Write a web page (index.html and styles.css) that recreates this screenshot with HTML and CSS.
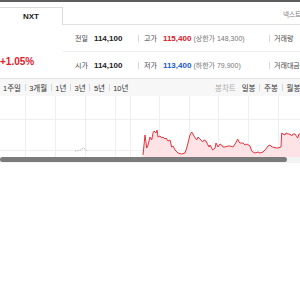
FILE: index.html
```html
<!DOCTYPE html>
<html lang="ko">
<head>
  <meta charset="UTF-8">
  <title>NXT 시세</title>
  <link rel="stylesheet" href="styles.css">
</head>
<body>
  <div class="topbar"></div>

  <div class="head">
    <div class="tab">NXT</div>
    <div class="head-rest">넥스트</div>
  </div>

  <div class="summary">
    <div class="price">
      <span class="rate">+1.05%</span>
    </div>
    <div class="table">
      <div class="row">
        <div class="cell c1"><span class="lbl">전일</span><b>114,100</b></div>
        <div class="cell c2"><span class="lbl">고가</span><b class="up">115,400</b><span class="sub">(상한가 148,300)</span></div>
        <div class="cell c3"><span class="lbl">거래량</span></div>
      </div>
      <div class="row">
        <div class="cell c1"><span class="lbl">시가</span><b>114,100</b></div>
        <div class="cell c2"><span class="lbl">저가</span><b class="down">113,400</b><span class="sub">(하한가 79,900)</span></div>
        <div class="cell c3"><span class="lbl">거래대금</span></div>
      </div>
    </div>
  </div>

  <div class="periods">
    <ul class="menu left">
      <li>1주일</li>
      <li>3개월</li>
      <li>1년</li>
      <li>3년</li>
      <li>5년</li>
      <li>10년</li>
    </ul>
    <ul class="menu right">
      <li class="dim">봉차트</li>
      <li>일봉</li>
      <li>주봉</li>
      <li>월봉</li>
    </ul>
  </div>

  <div class="chart">
    <svg width="300" height="61" viewBox="0 0 300 61">
      <g stroke="#efefef" stroke-width="1">
        <line x1="0" y1="23.5" x2="300" y2="23.5"/>
        <line x1="0" y1="54.5" x2="300" y2="54.5"/>
        <line x1="25.5" y1="0" x2="25.5" y2="61"/>
        <line x1="55.5" y1="0" x2="55.5" y2="61"/>
        <line x1="85.5" y1="0" x2="85.5" y2="61"/>
        <line x1="115.5" y1="0" x2="115.5" y2="61"/>
        <line x1="130.5" y1="0" x2="130.5" y2="61"/>
        <line x1="159.5" y1="0" x2="159.5" y2="61"/>
        <line x1="189.5" y1="0" x2="189.5" y2="61"/>
        <line x1="218.5" y1="0" x2="218.5" y2="61"/>
        <line x1="248.5" y1="0" x2="248.5" y2="61"/>
        <line x1="278.5" y1="0" x2="278.5" y2="61"/>
      </g>
      <polyline points="75,55 77,55 79,54 81,54 83,52 85,53 87,55" fill="none" stroke="#b8b8b8" stroke-width="1" stroke-dasharray="1.5 1"/>
      <polygon fill="#fde3e5" points="143,59 145,39 146.7,52 148,49 150,41 151.7,44 153,37 154,35 156,37 157,34 158,41 160,40 161.7,42 163,41 165,43 166,42 168,45 170,44 171.7,51 173,50 175,54 178,57 181.7,58 185,57 187,51 189,43 190,39 191.7,36 193,38 194,40 196.7,44 198,41 200,43 202.7,46 204,44 206,45 209,51 210,49 212.7,54 215,52 216,47 218,51 220,48 221.7,49 223,51 225,51 228,50 230,50 233,51 235.7,47 237.7,43 239,46 240,47 243,47 245,49 247,48 250,50 251.7,55 253,56 255,57 258,56 260,57 263,56 265,54 266.7,52 268,50 270,49 272,51 273,51 276,52 278,52 281,51 281.7,37 283,38 285,39 286,37 288,38 290,38 291.7,40 293,38 295,38 297.7,42 299,38 300,38 300,61 143,61"/>
      <polyline fill="none" stroke="#e8323c" stroke-width="1" stroke-linejoin="round" points="143,59 145,39 146.7,52 148,49 150,41 151.7,44 153,37 154,35 156,37 157,34 158,41 160,40 161.7,42 163,41 165,43 166,42 168,45 170,44 171.7,51 173,50 175,54 178,57 181.7,58 185,57 187,51 189,43 190,39 191.7,36 193,38 194,40 196.7,44 198,41 200,43 202.7,46 204,44 206,45 209,51 210,49 212.7,54 215,52 216,47 218,51 220,48 221.7,49 223,51 225,51 228,50 230,50 233,51 235.7,47 237.7,43 239,46 240,47 243,47 245,49 247,48 250,50 251.7,55 253,56 255,57 258,56 260,57 263,56 265,54 266.7,52 268,50 270,49 272,51 273,51 276,52 278,52 281,51 281.7,37 283,38 285,39 286,37 288,38 290,38 291.7,40 293,38 295,38 297.7,42 299,38 300,38"/>
    </svg>
  </div>

  <div class="scroll">
    <div class="thumb"></div>
  </div>
</body>
</html>
```

FILE: styles.css
```css
body {
  font-family: "Liberation Sans", "Noto Sans CJK KR", sans-serif;
  background-color: #fff;
  color: #333;
  margin: 0;
  padding: 0;
  width: 300px;
  overflow: hidden;
}
.topbar {
  height: 2px;
  background-color: #5e5e5e;
}
.head {
  display: flex;
  height: 23px;
}
.tab {
  flex: 0 0 63px;
  margin-top: 5px;
  border: 1px solid #dcdcdc;
  border-left: none;
  border-bottom: none;
  box-sizing: border-box;
  font-size: 8px;
  font-weight: bold;
  color: #222;
  display: flex;
  align-items: center;
  justify-content: center;
}
.head-rest {
  flex: 1;
  min-width: 0;
  border-bottom: 1px solid #e2e2e2;
  padding-left: 220px;
  font-size: 6.5px;
  color: #777;
  white-space: nowrap;
  overflow: hidden;
  line-height: 26px;
}
.summary {
  display: flex;
  height: 53px;
}
.price {
  flex: 0 0 63px;
  display: flex;
  flex-direction: column;
  justify-content: flex-end;
  padding-bottom: 10px;
  box-sizing: border-box;
}
.rate {
  color: #e0202c;
  font-size: 10px;
  font-weight: bold;
  line-height: 12px;
}
.table {
  flex: 1;
  min-width: 0;
  overflow: hidden;
}
.row {
  display: flex;
  align-items: center;
  height: 26px;
  white-space: nowrap;
}
.row:first-child {
  border-bottom: 1px solid #eeeeee;
}
.cell {
  display: flex;
  align-items: center;
  flex-shrink: 0;
  font-size: 7px;
}
.c1 {
  width: 75px;
  padding-left: 12px;
  box-sizing: border-box;
}
.c2 {
  width: 131px;
  box-sizing: border-box;
}
.c2::before,
.c3::before {
  content: "";
  width: 1px;
  height: 7px;
  background-color: #d8d8d8;
  margin-right: 5px;
}
.c3::before {
  margin-right: 4px;
}
.lbl {
  color: #444;
  margin-right: 6px;
}
.cell b {
  font-size: 8px;
  color: #222;
}
.cell b.up {
  color: #d9141f;
}
.cell b.down {
  color: #1a5bd0;
}
.sub {
  color: #777;
  margin-left: 2px;
  font-size: 7px;
}
.periods {
  display: flex;
  height: 18px;
  background-color: #f7f7f7;
  border-top: 1px solid #e6e6e6;
  box-sizing: border-box;
  overflow: hidden;
}
.menu {
  display: flex;
  align-items: center;
  list-style: none;
  margin: 0;
  padding: 0;
  font-size: 7.5px;
  color: #333;
  white-space: nowrap;
}
.menu.left {
  flex: 0 0 215px;
  padding-left: 3px;
  box-sizing: border-box;
}
.menu li {
  display: flex;
  align-items: center;
}
.menu li + li::before {
  content: "";
  width: 1px;
  height: 7px;
  background-color: #d6d6d6;
  margin: 0 4px;
}
.menu.left li + li::before {
  margin: 0 3.6px;
}
.menu.right {
  flex-shrink: 0;
}
.menu.right li + li::before {
  margin: 0 3.8px;
}
.menu.right li.dim {
  color: #aaa;
  margin-right: 6px;
}
.menu.right li.dim + li::before {
  display: none;
}
.chart {
  height: 61px;
}
.chart svg {
  display: block;
}
.scroll {
  height: 6px;
  background-color: #f3f3f3;
}
.thumb {
  width: 287px;
  height: 5px;
  background-color: #7b7b7b;
  border-radius: 3px;
}
```
